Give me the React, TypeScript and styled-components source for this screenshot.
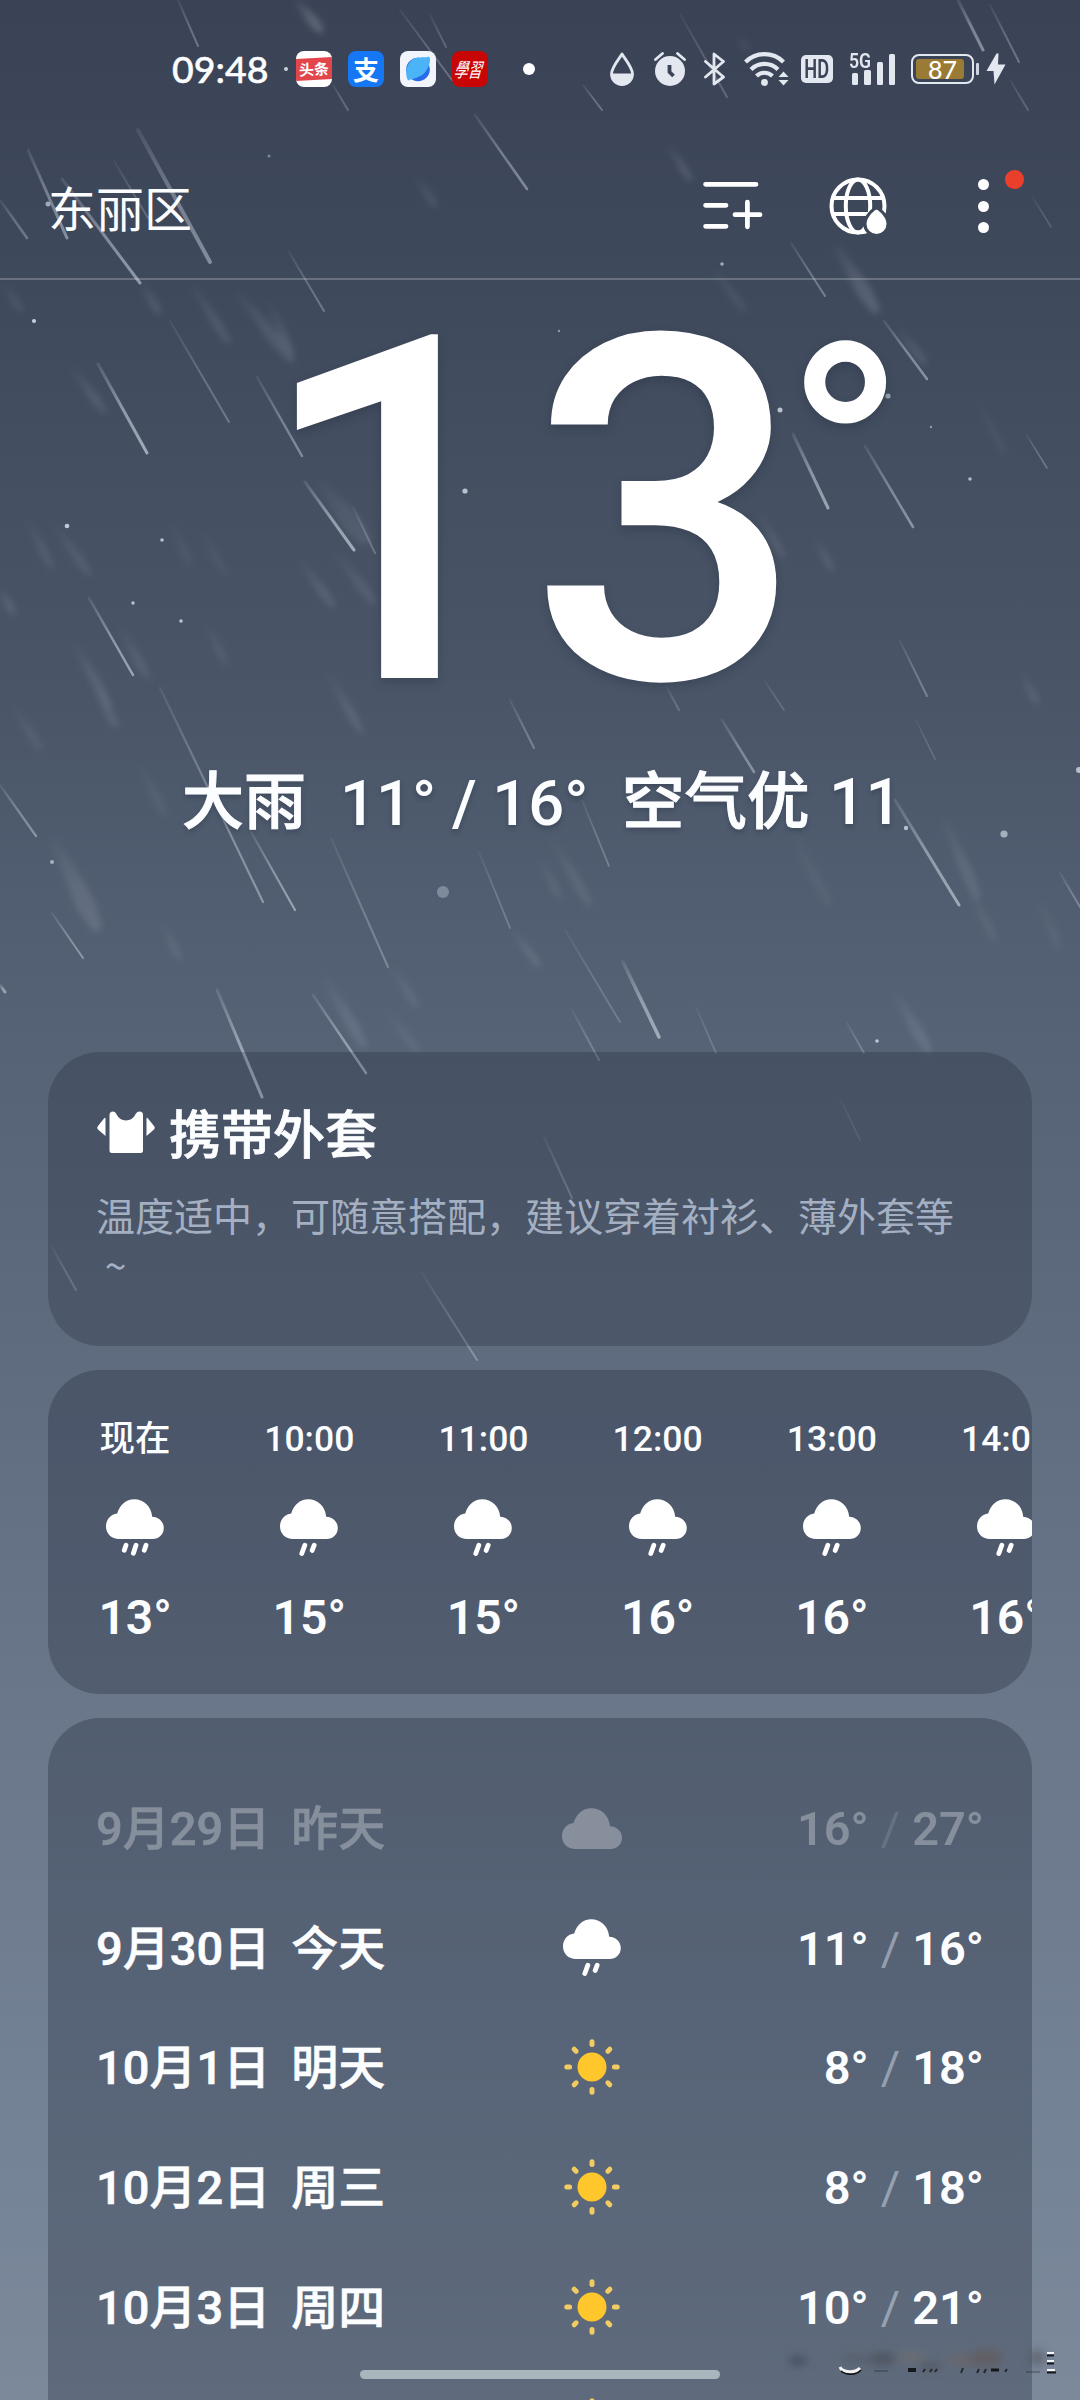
import React from 'react';
import styled, { createGlobalStyle } from 'styled-components';

const SANS = `Roboto, "Noto Sans CJK SC", sans-serif`;
const CJK = `"Noto Sans CJK SC", sans-serif`;

const GlobalStyle = createGlobalStyle`
  * { box-sizing: border-box; }
  body { margin: 0; background: #3a4456; }
`;

const Screen = styled.main`
  position: relative;
  display: flex;
  flex-direction: column;
  width: 1080px;
  height: 2400px;
  overflow: hidden;
  color: #fbfdff;
  font-family: ${SANS};
  background: linear-gradient(
    180deg,
    #3a4355 0px,
    #3f495c 280px,
    #4a5668 700px,
    #566276 1050px,
    #5f6b7f 1360px,
    #6a768a 1700px,
    #748296 2100px,
    #7c899b 2400px
  );
`;

const RainLayer = styled.svg`
  position: absolute;
  inset: 0;
  pointer-events: none;
`;

/* ---------- status bar ---------- */

const StatusBar = styled.div`
  position: relative;
  display: flex;
  align-items: center;
  flex: none;
  height: 138px;
  padding: 0 74px 0 172px;
`;

const Clock = styled.span`
  font-family: Lato, sans-serif;
  font-size: 37.5px;
  font-weight: 500;
  line-height: 46px;
  width: 112px;
  -webkit-text-stroke: 0.5px currentColor;
`;

const Dot = styled.span<{ $size: number; $color?: string }>`
  flex: none;
  width: ${(p) => p.$size}px;
  height: ${(p) => p.$size}px;
  border-radius: 50%;
  background: ${(p) => p.$color ?? '#fff'};
`;

const AppIcons = styled.div`
  display: flex;
  gap: 16px;
  margin: 0 35px 0 8px;
`;

const AppIcon = styled.span<{ $bg: string; $clip?: boolean }>`
  display: flex;
  align-items: center;
  justify-content: center;
  width: 36px;
  height: 36px;
  border-radius: 8px;
  overflow: ${(p) => (p.$clip ? 'hidden' : 'visible')};
  background: ${(p) => p.$bg};
  font-family: ${CJK};
  color: #fff;
`;

const Ribbon = styled.span`
  width: 40px;
  height: 22px;
  flex: none;
  background: #e2454a;
  transform: rotate(-3deg);
  font-size: 15px;
  font-weight: 700;
  line-height: 21px;
  text-align: center;
`;

const AppGlyph = styled.span<{ $size: number; $slant?: boolean }>`
  flex: none;
  font-size: ${(p) => p.$size}px;
  line-height: 38px;
  font-weight: ${(p) => (p.$slant ? 400 : 700)};
  transform: ${(p) => (p.$slant ? 'skewX(-16deg) scaleY(1.4)' : 'none')};
`;

const SystemIcons = styled.div`
  display: flex;
  align-items: center;
  margin-left: auto;
`;

const HdBadge = styled.span`
  display: flex;
  align-items: center;
  justify-content: center;
  width: 32px;
  height: 28px;
  margin-right: 16px;
  border-radius: 5px;
  background: #e3e8f0;
  color: #3a4456;
`;

const HdText = styled.span`
  flex: none;
  font-size: 26px;
  font-weight: 600;
  line-height: 30px;
  transform: scaleX(0.7);
`;

const Signal = styled.div`
  position: relative;
  width: 46px;
  height: 34px;
  margin-right: 16px;
`;

const SignalLabel = styled.span`
  position: absolute;
  left: 0;
  top: -2px;
  font-size: 21px;
  font-weight: 600;
  line-height: 22px;
  color: #e3e8f0;
  transform: scaleX(0.84);
  transform-origin: left;
`;

const Bars = styled.div`
  display: flex;
  align-items: flex-end;
  gap: 6px;
  height: 33px;
  padding-left: 3px;
`;

const Bar = styled.i<{ $h: number }>`
  width: 6.5px;
  height: ${(p) => p.$h}px;
  border-radius: 1.5px;
  background: #e3e8f0;
`;

const Battery = styled.span`
  display: flex;
  width: 63px;
  height: 30px;
  padding: 3px;
  border: 2px solid #e3e8f0;
  border-radius: 8px;
`;

const Charge = styled.span`
  width: 48px;
  padding-left: 5px;
  border-radius: 3px;
  background: #997b35;
  color: #fff;
  font-family: Lato, sans-serif;
  font-size: 25px;
  font-weight: 500;
  line-height: 20px;
  text-align: center;
  white-space: nowrap;
`;

const BatteryNub = styled.i`
  width: 3px;
  height: 12px;
  margin: 0 7px 0 2px;
  border-radius: 1px;
  background: #cfd5de;
`;

/* ---------- header ---------- */

const Header = styled.header`
  position: relative;
  display: flex;
  align-items: center;
  flex: none;
  height: 142px;
  padding: 0 48px 4px 48px;
  border-bottom: 2px solid rgba(255, 255, 255, 0.22);
`;

const City = styled.h1`
  margin: 0;
  font-family: ${CJK};
  font-size: 48px;
  font-weight: 400;
  line-height: 60px;
`;

const Actions = styled.nav`
  display: flex;
  align-items: center;
  margin-left: auto;
`;

const MenuWrap = styled.span`
  position: relative;
  display: flex;
  flex-direction: column;
  gap: 10.3px;
  margin-left: 89.5px;
  width: 54px;
`;

const Alert = styled.i`
  position: absolute;
  left: 27px;
  top: -9px;
  width: 18.5px;
  height: 18.5px;
  border-radius: 50%;
  background: #ea3f2b;
`;

/* ---------- hero ---------- */

const Hero = styled.section`
  position: relative;
  flex: none;
  height: 772px;
  padding-top: 34px;
`;

const Temperature = styled.div`
  display: flex;
  height: 400px;
  padding-left: 257px;
  color: #fff;
  font-size: 482px;
  font-weight: 500;
  line-height: 400px;
  text-shadow: 0 4px 10px rgba(30, 40, 56, 0.3);
`;

const BigDigit = styled.span<{ $w: number }>`
  width: ${(p) => p.$w}px;
`;

const Degree = styled.span`
  margin-left: -17px;
  font-size: 320px;
  line-height: 296px;
`;

const Summary = styled.div`
  display: flex;
  align-items: center;
  margin-top: 49px;
  padding-left: 182px;
  font-size: 62px;
  font-weight: 500;
  line-height: 80px;
  white-space: pre;
  text-shadow: 0 3px 5px rgba(30, 40, 56, 0.35);
`;

const SummaryPart = styled.span<{ $w?: number; $size?: number; $stroke?: number }>`
  width: ${(p) => (p.$w ? `${p.$w}px` : 'auto')};
  font-size: ${(p) => p.$size ?? 62}px;
  -webkit-text-stroke: ${(p) => p.$stroke ?? 0}px currentColor;
`;

/* ---------- cards ---------- */

const Cards = styled.div`
  position: relative;
  display: flex;
  flex-direction: column;
  gap: 24px;
  padding: 0 48px;
`;

const Card = styled.section<{ $h: number; $shade: number }>`
  flex: none;
  height: ${(p) => p.$h}px;
  border-radius: 52px;
  overflow: hidden;
  background: rgba(8, 15, 32, ${(p) => p.$shade});
`;

const AdviceCard = styled(Card)`
  padding: 48px 48px 0 49px;
`;

const AdviceTitle = styled.h2`
  display: flex;
  align-items: center;
  gap: 14px;
  margin: 0;
  font-family: ${CJK};
  font-size: 52px;
  font-weight: 500;
  line-height: 64px;
  -webkit-text-stroke: 0.8px currentColor;
`;

const AdviceText = styled.p`
  margin: 25px 0 0 -1px;
  font-family: ${CJK};
  font-size: 39px;
  line-height: 50px;
  color: #a4b0c1;
  white-space: pre;
`;

const HourlyCard = styled(Card)`
  display: flex;
  padding-top: 46px;
`;

const Hour = styled.div`
  display: flex;
  flex-direction: column;
  align-items: center;
  flex: none;
  width: 174.2px;
`;

const HourTime = styled.span`
  font-size: 35.5px;
  font-weight: 500;
  line-height: 46px;
`;

const HourIcon = styled.span`
  height: 58px;
  margin-top: 37px;
`;

const HourTemp = styled.span`
  margin-top: 31px;
  font-size: 48px;
  font-weight: 600;
  line-height: 60px;
`;

const DailyCard = styled(Card)`
  padding: 52px 48px 0;
`;

const Day = styled.div<{ $past?: boolean }>`
  display: grid;
  grid-template-columns: 466px 60px 1fr;
  align-items: center;
  height: 119.6px;
  font-size: 47px;
  font-weight: 500;
  line-height: 60px;
  opacity: ${(p) => (p.$past ? 0.3 : 1)};
`;

const DayLabel = styled.span`
  display: flex;
  gap: 21px;
  -webkit-text-stroke: 0.6px currentColor;
`;

const DayIcon = styled.span`
  display: flex;
  justify-content: center;
  margin-top: -2px;
`;

const DayRange = styled.span`
  display: flex;
  justify-content: flex-end;
  font-weight: 600;
`;

const Slash = styled.span`
  margin: 0 12px;
  font-weight: 400;
  color: rgba(226, 236, 248, 0.45);
`;

const HomeBar = styled.i`
  position: absolute;
  left: 360px;
  bottom: 21px;
  width: 360px;
  height: 9px;
  border-radius: 5px;
  background: #abb5be;
`;

const Watermark = styled.svg`
  position: absolute;
  right: 20px;
  bottom: 12px;
`;

/* ---------- drawings ---------- */

type Seg = [number, number, number, number, number, number];

const STREAKS: Seg[] = [
  [178, 0, 198, 46, 2, 0.3], [400, 10, 452, 80, 2, 0.28], [430, 15, 446, 47, 2, 0.2],
  [333, 85, 348, 110, 2, 0.25], [680, 14, 727, 97, 2, 0.22], [958, 0, 983, 50, 3, 0.45],
  [990, 5, 1019, 62, 2, 0.3], [583, 85, 602, 110, 2, 0.3], [1010, 80, 1028, 110, 2, 0.2],
  [28, 150, 67, 238, 3, 0.45], [0, 200, 27, 238, 2.5, 0.3], [138, 130, 210, 262, 4, 0.42],
  [62, 179, 140, 283, 3, 0.5], [114, 161, 148, 218, 2, 0.22], [475, 115, 527, 189, 2.5, 0.42],
  [289, 252, 324, 311, 2, 0.3], [170, 321, 229, 422, 2, 0.28], [98, 364, 147, 453, 3, 0.6],
  [257, 377, 302, 456, 2.5, 0.4], [305, 482, 354, 550, 3, 0.6], [353, 507, 375, 553, 2, 0.25],
  [89, 598, 133, 675, 2.5, 0.55], [791, 243, 825, 296, 2, 0.35], [884, 321, 927, 379, 2.5, 0.45],
  [793, 434, 828, 508, 3, 0.55], [865, 446, 913, 527, 2.5, 0.45], [1026, 434, 1047, 468, 1.5, 0.28],
  [1032, 196, 1051, 227, 1.5, 0.18], [900, 641, 927, 696, 2, 0.3], [666, 686, 679, 710, 2, 0.2],
  [764, 680, 784, 710, 1.5, 0.2], [160, 688, 263, 902, 2.2, 0.42], [251, 832, 295, 910, 2.2, 0.5],
  [331, 838, 388, 967, 2, 0.3], [0, 785, 36, 836, 2.2, 0.4], [52, 913, 83, 958, 2, 0.42],
  [510, 700, 534, 748, 2, 0.3], [722, 720, 754, 772, 2.5, 0.4], [895, 800, 959, 905, 3, 0.55],
  [582, 800, 609, 866, 1.8, 0.28], [623, 962, 659, 1037, 3.5, 0.55], [565, 930, 620, 1022, 1.8, 0.22],
  [479, 852, 510, 928, 1.8, 0.25], [217, 990, 262, 1097, 3, 0.6], [313, 995, 366, 1073, 2.5, 0.52],
  [1060, 873, 1080, 907, 2, 0.3], [916, 720, 935, 759, 1.5, 0.2], [572, 1010, 599, 1060, 2, 0.25],
  [696, 1007, 716, 1053, 1.8, 0.2], [847, 1023, 864, 1053, 1.8, 0.25], [0, 985, 5, 992, 3, 0.5],
  [52, 1247, 76, 1290, 2, 0.28], [544, 1137, 572, 1198, 2, 0.28], [422, 1273, 477, 1360, 2, 0.32],
  [838, 1094, 860, 1140, 2, 0.12],
];

const HAZE: Seg[] = [
  [296, 0, 322, 32, 11, 0.22], [738, 36, 748, 50, 7, 0.08], [193, 286, 229, 343, 9, 0.12],
  [238, 293, 293, 361, 13, 0.12], [269, 303, 292, 353, 9, 0.1], [72, 368, 105, 412, 9, 0.12],
  [28, 521, 52, 568, 8, 0.1], [55, 525, 90, 575, 9, 0.1], [172, 525, 190, 564, 7, 0.07],
  [200, 530, 226, 575, 7, 0.06], [300, 561, 334, 607, 9, 0.12], [336, 553, 375, 604, 10, 0.1],
  [207, 625, 226, 664, 7, 0.1], [74, 643, 110, 707, 10, 0.12], [120, 628, 148, 678, 9, 0.1],
  [320, 482, 368, 543, 20, 0.09], [329, 675, 362, 733, 9, 0.12], [141, 282, 160, 314, 8, 0.12],
  [0, 589, 14, 614, 8, 0.13], [417, 178, 436, 207, 8, 0.1], [669, 146, 691, 180, 7, 0.16],
  [836, 246, 877, 312, 15, 0.16], [898, 329, 926, 364, 8, 0.12], [815, 539, 833, 571, 7, 0.12],
  [977, 400, 1005, 454, 7, 0.06], [759, 514, 783, 557, 9, 0.1], [1022, 675, 1038, 704, 7, 0.12],
  [712, 268, 745, 311, 7, 0.09], [54, 840, 98, 930, 20, 0.13], [944, 820, 978, 898, 12, 0.12],
  [970, 890, 995, 940, 8, 0.09], [324, 977, 365, 1047, 12, 0.12], [895, 993, 930, 1053, 12, 0.12],
  [553, 840, 590, 905, 10, 0.1], [541, 860, 560, 898, 8, 0.09], [96, 690, 117, 727, 9, 0.12],
  [14, 707, 41, 750, 9, 0.08], [162, 923, 180, 960, 8, 0.1], [393, 967, 417, 1007, 8, 0.1],
  [512, 930, 540, 967, 7, 0.14], [5, 285, 22, 312, 9, 0.08], [140, 765, 165, 815, 9, 0.07],
  [385, 1010, 420, 1053, 8, 0.08], [790, 830, 830, 905, 12, 0.05], [1040, 900, 1060, 950, 9, 0.06],
];

const SPECKS: [number, number, number, number][] = [
  [34, 321, 2, 0.85], [67, 526, 2.3, 0.8], [162, 540, 1.8, 0.75], [133, 603, 1.7, 0.75],
  [181, 621, 1.8, 0.75], [465, 491, 2.6, 0.75], [48, 204, 2.5, 0.6], [269, 156, 1.5, 0.4],
  [780, 410, 2.5, 0.75], [888, 396, 2.6, 0.55], [970, 479, 1.8, 0.7], [722, 264, 1.8, 0.6],
  [931, 427, 1.2, 0.5], [443, 892, 6, 0.32], [1004, 834, 3.6, 0.6], [52, 862, 2, 0.6],
  [906, 828, 2.2, 0.7], [877, 1041, 1.8, 0.75], [1079, 770, 3, 0.7], [559, 331, 1.2, 0.5],
];

const Fade = ({ id, seg }: { id: string; seg: Seg }) => {
  const [x1, y1, x2, y2, , o] = seg;
  return (
    <linearGradient id={id} gradientUnits="userSpaceOnUse" x1={x1} y1={y1} x2={x2} y2={y2}>
      <stop offset="0" stopColor="#dfe9f5" stopOpacity={o * 0.2} />
      <stop offset="0.5" stopColor="#dfe9f5" stopOpacity={o * 0.8} />
      <stop offset="1" stopColor="#dfe9f5" stopOpacity={o} />
    </linearGradient>
  );
};

/* A drop that is narrow at its tail and full at its head. */
const hazePath = ([x1, y1, x2, y2, w]: Seg) => {
  const len = Math.hypot(x2 - x1, y2 - y1);
  const nx = (-(y2 - y1) / len) * (w / 2);
  const ny = ((x2 - x1) / len) * (w / 2);
  const mx = x1 + (x2 - x1) * 0.7;
  const my = y1 + (y2 - y1) * 0.7;
  return `M${x1 + nx * 0.4} ${y1 + ny * 0.4}L${mx + nx} ${my + ny}L${x2 + nx * 0.5} ${y2 + ny * 0.5}L${x2 - nx * 0.5} ${y2 - ny * 0.5}L${mx - nx} ${my - ny}L${x1 - nx * 0.4} ${y1 - ny * 0.4}Z`;
};

const Rain = () => (
  <RainLayer width="1080" height="2400" viewBox="0 0 1080 2400">
    <defs>
      <filter id="haze" x="0" y="0" width="1080" height="1400" filterUnits="userSpaceOnUse">
        <feGaussianBlur stdDeviation="3" />
      </filter>
      {STREAKS.map((s, i) => <Fade key={i} id={`s${i}`} seg={s} />)}
      {HAZE.map((s, i) => <Fade key={i} id={`h${i}`} seg={s} />)}
    </defs>
    <g filter="url(#haze)">
      {HAZE.map((s, i) => (
        <path key={i} d={hazePath(s)} fill={`url(#h${i})`} />
      ))}
    </g>
    {STREAKS.map(([x1, y1, x2, y2, w], i) => (
      <line key={i} x1={x1} y1={y1} x2={x2} y2={y2} stroke={`url(#s${i})`} strokeWidth={w} strokeLinecap="round" />
    ))}
    {SPECKS.map(([x, y, r, o], i) => (
      <circle key={i} cx={x} cy={y} r={r} fill="#dfe9f5" fillOpacity={o} />
    ))}
  </RainLayer>
);

const CLOUD =
  'M13 40C5.500 40 0 34.600 0 27.500C0 20.500 4.800 15.300 11.200 14.600C13.600 6 20 0.200 28.300 0.200C37.300 0.200 45.400 6.800 46.200 17.800C53 18.200 57.800 22.900 57.800 29C57.800 35.300 53 40 46.500 40Z';

const RainCloud = ({ drops }: { drops: 2 | 3 }) => (
  <svg width="58" height="58" viewBox="0 0 58 58" fill="#fff">
    <path d={CLOUD} />
    <g stroke="#fff" strokeWidth="4.800" strokeLinecap="round">
      {drops === 3 ? (
        <>
          <path d="M20 46.200L18.300 51.200" />
          <path d="M30 46.200L27.400 54.300" />
          <path d="M40 46.200L38.300 51.200" />
        </>
      ) : (
        <>
          <path d="M24.800 46.200L21.800 54.500" />
          <path d="M34.200 46.200L32.200 51.400" />
        </>
      )}
    </g>
  </svg>
);

const Cloud = () => (
  <svg width="60" height="41" viewBox="0 0 57.800 40" preserveAspectRatio="none" fill="#fff">
    <path d={CLOUD} />
  </svg>
);

const Sun = () => (
  <svg width="56" height="56" viewBox="-28 -28 56 56">
    <circle r="14.500" fill="#ffc72b" />
    <g stroke="#f2cc62" strokeWidth="5" strokeLinecap="round">
      {[0, 45, 90, 135, 180, 225, 270, 315].map((a) => (
        <path key={a} d="M0 -25.200V-22.400" transform={`rotate(${a})`} />
      ))}
    </g>
  </svg>
);

const Shirt = () => (
  <svg width="58" height="42" viewBox="0 0 58 42" fill="#fff">
    <path d="M12.500 4Q12.500 0.500 16 0.500Q18 0.500 19 2.500Q22.500 9.500 29 9.500Q35.500 9.500 39 2.500Q40 0.500 42.500 0.500Q46 0.500 46 4V39.500Q46 42 43.500 42H15Q12.500 42 12.500 39.500Z" />
    <path d="M8.500 8V25L1 18.500Q-0.500 16.800 1 15L7 7.500Q8.500 6 8.500 8Z" />
    <path d="M49.500 8V25L57 18.500Q58.500 16.800 57 15L51 7.500Q49.500 6 49.500 8Z" />
  </svg>
);

const AddListIcon = () => (
  <svg width="60" height="58" viewBox="0 0 60 58" stroke="#fff" strokeWidth="4.800" strokeLinecap="round" fill="none">
    <path d="M2.600 7.300H53M2.600 28.300H23M2.600 49.300H23M32 37.700H57M44.400 25.200V49.800" />
  </svg>
);

const GlobeIcon = () => (
  <svg width="60" height="58" viewBox="0 0 60 58" fill="none">
    <mask id="gm">
      <rect width="60" height="58" fill="#fff" />
      <path d="M47.500 28C53 32 61 40 61 46C61 54 55 60 47.500 60C40 60 34 54 34 46C34 40 42 32 47.500 28Z" fill="#000" />
    </mask>
    <g stroke="#fff" strokeWidth="4" mask="url(#gm)">
      <circle cx="29" cy="29" r="26.500" />
      <ellipse cx="29" cy="29" rx="12.200" ry="26.500" />
      <path d="M5 21H53M5 37H53" />
    </g>
    <path d="M47.500 32.500C52 35 57.500 41 57.500 47A10 10 0 0 1 37.500 47C37.500 41 43 35 47.500 32.500Z" fill="#fff" />
  </svg>
);

const DropIcon = () => (
  <svg width="24" height="34" viewBox="0 0 24 34">
    <path d="M12 2C15 7 22.500 15.500 22.500 22A10.500 10.500 0 0 1 1.500 22C1.500 15.500 9 7 12 2Z" fill="none" stroke="#e3e8f0" strokeWidth="2.800" strokeLinejoin="round" />
    <path d="M1.500 21.500H22.500A10.500 10.500 0 0 1 1.500 21.500Z" fill="#e3e8f0" />
  </svg>
);

const AlarmIcon = () => (
  <svg width="32" height="34" viewBox="0 0 32 34">
    <circle cx="16" cy="19" r="15" fill="#e3e8f0" />
    <path d="M1.500 7.500L8.500 1.500M30.500 7.500L23.500 1.500" stroke="#e3e8f0" strokeWidth="2.800" strokeLinecap="round" />
    <path d="M15.500 13V20L19.500 24" stroke="#3a4456" strokeWidth="3.800" fill="none" />
  </svg>
);

const BluetoothIcon = () => (
  <svg width="22" height="34" viewBox="0 0 22 34" fill="none" stroke="#e3e8f0" strokeWidth="2.800" strokeLinejoin="round" strokeLinecap="round">
    <path d="M1.500 9.500L19.500 25L10 32V2L19.500 9.500L1.500 25" />
  </svg>
);

const WifiIcon = () => (
  <svg width="46" height="36" viewBox="0 0 46 36">
    <g fill="none" stroke="#e3e8f0" strokeWidth="4.200">
      <path d="M1.500 11A27 27 0 0 1 39.500 11" />
      <path d="M7 18.500A19 19 0 0 1 34 18.500" />
      <path d="M12.500 25A11.500 11.500 0 0 1 28.500 25" />
    </g>
    <circle cx="20.500" cy="31.500" r="3.400" fill="#e3e8f0" />
    <path d="M39.500 20.500L44.500 26H34.500ZM39.500 34.500L44.500 29H34.500Z" fill="#e3e8f0" />
  </svg>
);

const BoltIcon = () => (
  <svg width="20" height="32" viewBox="0 0 20 32" fill="#e3e8f0">
    <path d="M10.500 0.500L0.500 18H7.500L8.500 31.500L19.500 11.500H12L12.500 0.500Z" />
  </svg>
);

const CompassLeaf = () => (
  <svg width="36" height="36" viewBox="0 0 36 36">
    <circle cx="18" cy="18.500" r="11.800" fill="#2a6bea" />
    <path d="M8 29.500C4.500 23 6 12 14 7.500C20 5.500 25 7 29 5.500C31 8 30 14 26 20C22 26 15 27 8 29.500Z" fill="#4ab4f7" />
  </svg>
);

const Smudge = () => (
  <Watermark width="290" height="46" viewBox="0 0 290 46">
    <defs>
      <filter id="smear" x="-20%" y="-50%" width="140%" height="200%">
        <feGaussianBlur stdDeviation="4.500" />
      </filter>
    </defs>
    <g filter="url(#smear)" fill="#4d4f58">
      <ellipse cx="28" cy="19" rx="10" ry="5" fill="#485066" />
      <ellipse cx="84" cy="17" rx="14" ry="5" fillOpacity="0.4" />
      <ellipse cx="112" cy="17" rx="14" ry="7" fillOpacity="0.7" />
      <ellipse cx="142" cy="15" rx="14" ry="5" fill="#77706b" fillOpacity="0.5" />
      <ellipse cx="160" cy="24" rx="12" ry="5" fillOpacity="0.5" />
      <ellipse cx="190" cy="18" rx="12" ry="6" fill="#6f6460" fillOpacity="0.6" />
      <ellipse cx="216" cy="16" rx="17" ry="9" fill="#625d5e" fillOpacity="0.8" />
      <ellipse cx="267" cy="16" rx="9" ry="9" fillOpacity="0.5" />
    </g>
    <path d="M70 25C72 31 86 31 90 26" stroke="#f2f2f2" strokeWidth="3" fill="none" />
    <path d="M71 29C76 33.500 86 33.500 91 28" stroke="#101214" strokeWidth="1.500" fill="none" />
    <g stroke="#15181d" strokeWidth="2">
      <path d="M138 28H146" strokeWidth="4" />
      <path d="M153 30L155 27M160 30L162 27M165 30L167 27M191 31L193 26M207 31L209 27M214 31L216 27M235 30L237 27" strokeOpacity="0.8" />
      <path d="M221 28H229" strokeWidth="3" />
      <path d="M104 29H118M256 30H270" strokeWidth="1" strokeOpacity="0.5" />
      <path d="M277 13.500H284M277 21.500H284M277 30.500H286" />
    </g>
    <path d="M277 11H284M277 19H284M277 28H285" stroke="#f4f6f8" strokeWidth="2" />
  </Watermark>
);

/* ---------- data ---------- */

const HOURS: { time: string; temp: string; drops: 2 | 3 }[] = [
  { time: '现在', temp: '13°', drops: 3 },
  { time: '10:00', temp: '15°', drops: 2 },
  { time: '11:00', temp: '15°', drops: 2 },
  { time: '12:00', temp: '16°', drops: 2 },
  { time: '13:00', temp: '16°', drops: 2 },
  { time: '14:00', temp: '16°', drops: 2 },
];

const DAYS = [
  { date: '9月29日', name: '昨天', icon: <Cloud />, low: '16°', high: '27°', past: true },
  { date: '9月30日', name: '今天', icon: <RainCloud drops={2} />, low: '11°', high: '16°' },
  { date: '10月1日', name: '明天', icon: <Sun />, low: '8°', high: '18°' },
  { date: '10月2日', name: '周三', icon: <Sun />, low: '8°', high: '18°' },
  { date: '10月3日', name: '周四', icon: <Sun />, low: '10°', high: '21°' },
];

const IconSlot = styled.span<{ $mr: number }>`
  display: flex;
  margin-right: ${(p) => p.$mr}px;
`;

export default function App() {
  return (
    <>
      <GlobalStyle />
      <Screen>
        <Rain />
        <StatusBar>
          <Clock>09:48</Clock>
          <Dot $size={4} $color="#c9d0da" />
          <AppIcons>
            <AppIcon $bg="#fff" $clip><Ribbon>头条</Ribbon></AppIcon>
            <AppIcon $bg="#1677f5"><AppGlyph $size={26}>支</AppGlyph></AppIcon>
            <AppIcon $bg="#f1f4fa"><CompassLeaf /></AppIcon>
            <AppIcon $bg="#c80606"><AppGlyph $size={14} $slant>學習</AppGlyph></AppIcon>
          </AppIcons>
          <Dot $size={12} />
          <SystemIcons>
            <IconSlot $mr={20}><DropIcon /></IconSlot>
            <IconSlot $mr={18}><AlarmIcon /></IconSlot>
            <IconSlot $mr={18}><BluetoothIcon /></IconSlot>
            <IconSlot $mr={11}><WifiIcon /></IconSlot>
            <HdBadge><HdText>HD</HdText></HdBadge>
            <Signal>
              <SignalLabel>5G</SignalLabel>
              <Bars><Bar $h={12} /><Bar $h={15} /><Bar $h={23} /><Bar $h={31} /></Bars>
            </Signal>
            <Battery><Charge>87</Charge></Battery>
            <BatteryNub />
            <BoltIcon />
          </SystemIcons>
        </StatusBar>

        <Header>
          <City>东丽区</City>
          <Actions>
            <IconSlot $mr={66}><AddListIcon /></IconSlot>
            <GlobeIcon />
            <MenuWrap>
              <Dot $size={11} />
              <Dot $size={11} />
              <Dot $size={11} />
              <Alert />
            </MenuWrap>
          </Actions>
        </Header>

        <Hero>
          <Temperature>
            <BigDigit $w={272}>1</BigDigit>
            <BigDigit $w={272}>3</BigDigit>
            <Degree>°</Degree>
          </Temperature>
          <Summary>
            <SummaryPart $w={158} $stroke={1}>大雨</SummaryPart>
            <SummaryPart $w={282} $size={63.3}>11° / 16°</SummaryPart>
            <SummaryPart $w={207} $stroke={1} $size={62.5}>空气优</SummaryPart>
            <SummaryPart $size={64}>11</SummaryPart>
          </Summary>
        </Hero>

        <Cards>
          <AdviceCard $h={294} $shade={0.2}>
            <AdviceTitle><Shirt />携带外套</AdviceTitle>
            <AdviceText>{'温度适中，可随意搭配，建议穿着衬衫、薄外套等\n ~'}</AdviceText>
          </AdviceCard>

          <HourlyCard $h={323.5} $shade={0.23}>
            {HOURS.map((h) => (
              <Hour key={h.time}>
                <HourTime>{h.time}</HourTime>
                <HourIcon><RainCloud drops={h.drops} /></HourIcon>
                <HourTemp>{h.temp}</HourTemp>
              </Hour>
            ))}
          </HourlyCard>

          <DailyCard $h={760} $shade={0.25}>
            {DAYS.map((d) => (
              <Day key={d.date} $past={d.past}>
                <DayLabel><span>{d.date}</span><span>{d.name}</span></DayLabel>
                <DayIcon>{d.icon}</DayIcon>
                <DayRange>{d.low}<Slash>/</Slash>{d.high}</DayRange>
              </Day>
            ))}
            <Day>
              <span />
              <DayIcon><Sun /></DayIcon>
            </Day>
          </DailyCard>
        </Cards>

        <HomeBar />
        <Smudge />
      </Screen>
    </>
  );
}
